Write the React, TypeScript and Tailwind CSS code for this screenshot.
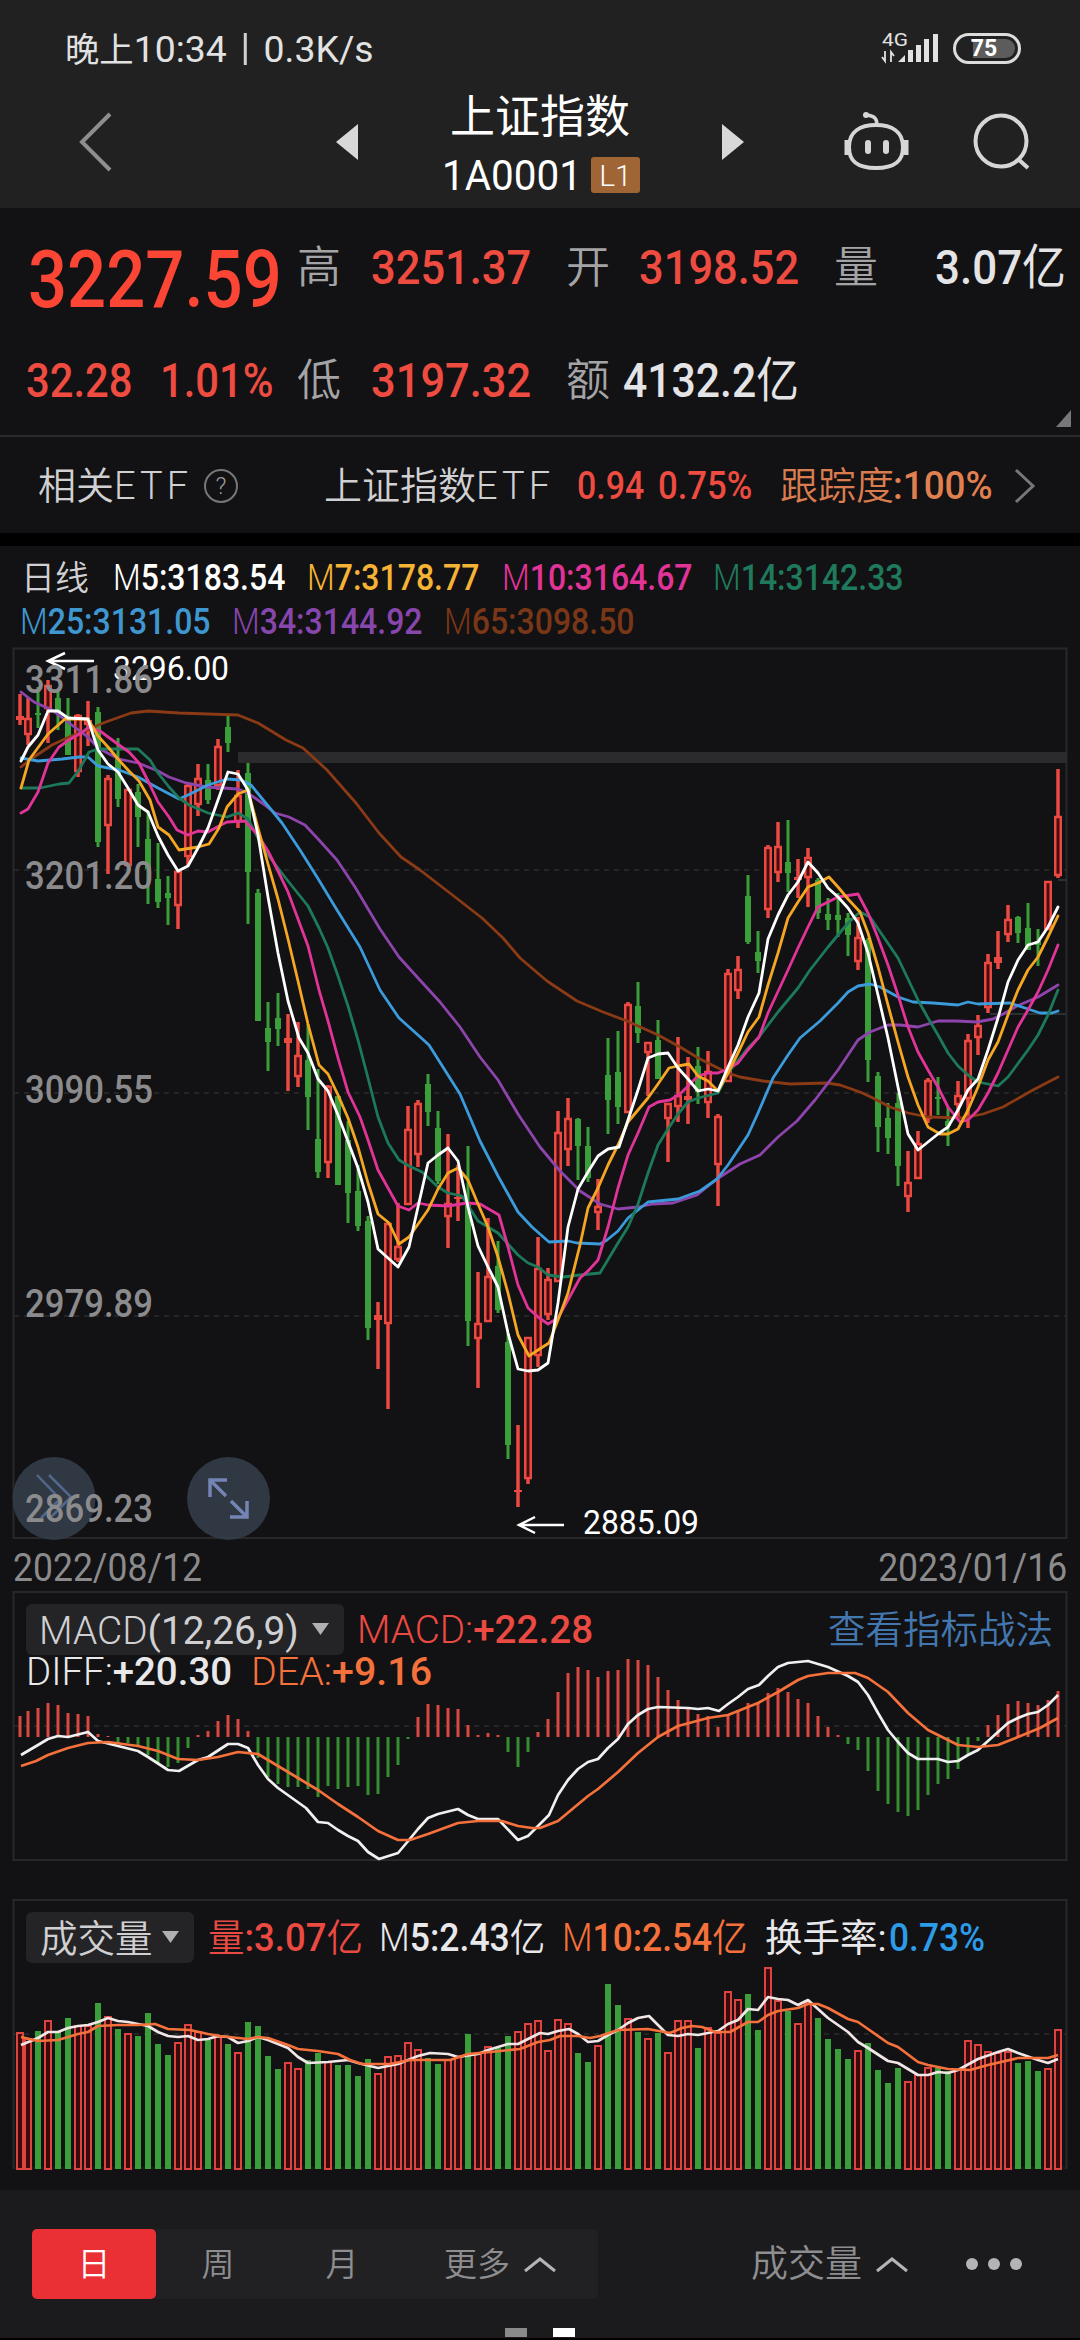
import clsx from 'clsx'

// direction, high, body top, body bottom, low
type Candle = [string, number, number, number, number]

const CANDLES: Candle[] = [
  ['r', 694, 716, 720, 725], ['r', 698, 718, 735, 745], ['g', 687, 713, 715, 728], ['r', 680, 685, 709, 743], ['g', 690, 698, 712, 730],
  ['g', 698, 716, 755, 755], ['r', 714, 715, 772, 777], ['r', 701, 720, 725, 746], ['g', 707, 712, 842, 847], ['r', 775, 778, 826, 874],
  ['g', 738, 758, 799, 807], ['r', 789, 789, 866, 866], ['g', 784, 792, 817, 847], ['g', 811, 839, 869, 904], ['g', 843, 879, 902, 908],
  ['g', 876, 893, 898, 925], ['r', 869, 871, 906, 929], ['r', 783, 785, 857, 865], ['r', 764, 778, 805, 816], ['g', 764, 780, 800, 804],
  ['r', 739, 746, 786, 790], ['g', 715, 727, 743, 752], ['r', 770, 795, 822, 828], ['g', 763, 773, 872, 924], ['g', 889, 893, 1021, 1021],
  ['g', 1002, 1028, 1042, 1071], ['g', 993, 1018, 1029, 1046], ['r', 1014, 1038, 1043, 1091], ['r', 1022, 1055, 1077, 1087], ['g', 1024, 1060, 1097, 1130],
  ['g', 1069, 1139, 1172, 1178], ['r', 1085, 1086, 1163, 1178], ['g', 1096, 1096, 1185, 1185], ['g', 1121, 1140, 1193, 1223], ['g', 1165, 1191, 1226, 1231],
  ['g', 1216, 1221, 1328, 1340], ['r', 1302, 1315, 1320, 1369], ['r', 1222, 1223, 1324, 1409], ['r', 1203, 1246, 1260, 1262], ['r', 1106, 1129, 1205, 1205],
  ['r', 1100, 1103, 1155, 1167], ['g', 1074, 1084, 1112, 1126], ['g', 1111, 1128, 1181, 1184], ['r', 1134, 1203, 1217, 1248], ['r', 1165, 1197, 1199, 1221],
  ['g', 1146, 1205, 1321, 1346], ['r', 1272, 1323, 1339, 1388], ['r', 1218, 1276, 1322, 1322], ['g', 1241, 1266, 1310, 1313], ['g', 1333, 1342, 1445, 1459],
  ['r', 1425, 1490, 1492, 1507], ['r', 1337, 1337, 1479, 1484], ['r', 1237, 1268, 1356, 1367], ['r', 1268, 1279, 1315, 1320], ['r', 1111, 1132, 1282, 1282],
  ['r', 1098, 1118, 1150, 1166], ['g', 1118, 1119, 1146, 1180], ['g', 1127, 1146, 1178, 1182], ['r', 1179, 1206, 1213, 1230], ['g', 1038, 1075, 1100, 1134],
  ['g', 1031, 1072, 1107, 1124], ['r', 1002, 1004, 1113, 1113], ['g', 982, 1006, 1033, 1043], ['r', 1042, 1042, 1053, 1096], ['g', 1020, 1040, 1079, 1079],
  ['r', 1103, 1103, 1119, 1162], ['r', 1037, 1095, 1107, 1122], ['r', 1057, 1096, 1100, 1124], ['g', 1047, 1066, 1092, 1104], ['r', 1051, 1071, 1103, 1118],
  ['r', 1114, 1116, 1165, 1206], ['r', 969, 973, 1082, 1082], ['r', 956, 969, 991, 999], ['g', 875, 896, 942, 944], ['g', 931, 952, 961, 973],
  ['r', 845, 847, 910, 918], ['r', 822, 846, 873, 882], ['g', 820, 862, 873, 892], ['r', 859, 877, 880, 898], ['r', 848, 857, 878, 907],
  ['g', 878, 880, 913, 919], ['g', 898, 914, 920, 930], ['g', 893, 915, 920, 937], ['g', 913, 918, 935, 956], ['r', 917, 937, 962, 970],
  ['g', 938, 940, 1060, 1082], ['g', 1072, 1076, 1127, 1152], ['g', 1103, 1118, 1138, 1154], ['g', 1093, 1103, 1166, 1186], ['r', 1151, 1182, 1197, 1212],
  ['r', 1131, 1143, 1179, 1179], ['r', 1078, 1080, 1119, 1123], ['g', 1077, 1097, 1099, 1115], ['g', 1107, 1121, 1126, 1146], ['r', 1081, 1095, 1105, 1117],
  ['r', 1034, 1040, 1099, 1128], ['r', 1015, 1025, 1038, 1055], ['r', 954, 962, 1008, 1013], ['r', 931, 957, 963, 969], ['r', 905, 919, 935, 942],
  ['g', 916, 917, 933, 943], ['g', 903, 928, 950, 950], ['g', 929, 941, 945, 966], ['r', 881, 881, 930, 930], ['r', 769, 816, 876, 878],
]

const MACD = [
  1716, 1711, 1708, 1703, 1705, 1713, 1714, 1716, 1734, 1736, 1743, 1743, 1746, 1755, 1763, 1767, 1763, 1748, 1735, 1731, 1721, 1715, 1719, 1731,
  1758, 1777, 1784, 1787, 1787, 1789, 1797, 1786, 1789, 1787, 1786, 1795, 1794, 1777, 1765, 1739, 1717, 1704, 1705, 1708, 1709, 1725, 1735, 1733,
  1735, 1752, 1767, 1752, 1732, 1719, 1692, 1673, 1667, 1670, 1677, 1671, 1670, 1659, 1660, 1665, 1677, 1690, 1700, 1707, 1714, 1716, 1727, 1714,
  1710, 1703, 1703, 1693, 1688, 1692, 1699, 1703, 1716, 1727, 1735, 1744, 1750, 1771, 1791, 1804, 1812, 1816, 1810, 1795, 1784, 1779, 1769, 1756,
  1741, 1725, 1715, 1704, 1701, 1703, 1705, 1700, 1691,
]

const VOLUME = [
  2033, 2039, 2031, 2021, 2031, 2018, 2026, 2026, 2003, 2017, 2029, 2034, 2036, 2013, 2044, 2055, 2043, 2025, 2032, 2040, 2037, 2044, 2053, 2022,
  2026, 2056, 2069, 2063, 2069, 2060, 2053, 2062, 2065, 2065, 2076, 2059, 2074, 2057, 2056, 2043, 2050, 2058, 2064, 2060, 2057, 2034, 2054, 2047,
  2048, 2036, 2032, 2024, 2021, 2051, 2020, 2024, 2053, 2062, 2046, 1984, 2005, 2019, 2032, 2039, 2033, 2053, 2021, 2021, 2048, 2028, 2033, 1992,
  2000, 1994, 2030, 1968, 2001, 2011, 2024, 2003, 2018, 2039, 2049, 2059, 2051, 2043, 2070, 2083, 2068, 2082, 2075, 2068, 2068, 2071, 2070, 2041,
  2045, 2052, 2053, 2052, 2063, 2061, 2071, 2069, 2030,
]

const MA_LINES = [
  {
    color: '#8a3a15',
    points: '21,767 34,757 52,745 69,737 90,729 103,723 131,713 148,711 179,713 238,715 258,723 286,740 303,748 327,770 356,803 379,833 401,857 420,870 455,897 482,918 503,938 520,958 547,981 577,1001 603,1012 627,1021 658,1035 680,1047 700,1059 728,1073 740,1077 763,1081 790,1084 827,1083 840,1085 860,1092 873,1098 890,1107 908,1113 928,1117 963,1118 983,1114 1003,1107 1033,1090 1058,1077',
  },
  {
    color: '#8e44ad',
    points: '21,692 34,702 52,710 69,723 88,737 98,748 119,759 138,763 158,771 169,777 186,783 207,787 238,789 248,793 262,803 275,813 289,817 305,825 319,840 337,860 355,887 380,929 399,957 418,978 440,1002 460,1027 480,1057 498,1080 518,1114 540,1147 560,1171 580,1191 600,1204 618,1209 638,1207 653,1204 673,1203 697,1195 717,1179 740,1164 760,1155 778,1137 797,1121 815,1100 838,1070 858,1040 870,1032 888,1025 900,1025 918,1027 938,1021 957,1021 977,1022 993,1019 1005,1013 1017,1006 1038,997 1058,985',
  },
  {
    color: '#3b9bdb',
    points: '21,758 38,761 62,759 79,757 88,757 98,766 119,770 138,777 158,788 179,799 188,795 208,785 227,779 241,780 251,785 269,807 282,823 300,850 317,877 337,910 360,947 380,990 399,1018 418,1035 429,1045 460,1094 480,1141 498,1176 518,1212 532,1227 549,1242 568,1241 577,1243 600,1244 607,1240 618,1231 628,1218 648,1202 678,1199 700,1191 717,1179 728,1165 748,1135 758,1113 773,1078 788,1055 800,1038 820,1021 838,1003 848,992 858,986 870,984 880,987 898,997 913,1002 933,1003 958,1005 968,1002 978,1004 1010,1003 1028,1009 1040,1013 1052,1013 1058,1011',
  },
  {
    color: '#1c7a5a',
    points: '21,788 40,788 59,784 69,783 79,770 89,752 98,749 138,749 150,760 158,773 169,787 179,798 189,805 208,813 227,817 238,813 248,819 258,838 268,855 288,881 308,906 319,928 328,948 338,976 348,1006 358,1040 368,1078 378,1117 388,1143 399,1160 409,1166 422,1172 438,1187 448,1193 462,1196 478,1221 498,1233 518,1255 528,1263 538,1267 548,1275 563,1277 580,1275 600,1273 618,1243 628,1227 638,1204 648,1173 658,1145 668,1129 678,1114 688,1102 698,1098 718,1093 728,1073 748,1048 759,1037 778,1012 798,988 810,970 828,947 848,923 860,912 870,917 898,958 918,1000 928,1018 938,1035 948,1053 958,1066 968,1075 978,1082 998,1086 1008,1077 1028,1050 1038,1035 1048,1015 1058,990',
  },
  {
    color: '#e23498',
    points: '21,813 28,809 38,792 48,763 59,747 69,740 81,733 89,727 100,731 119,745 129,752 139,763 150,785 158,802 169,817 177,830 188,835 198,831 208,832 219,826 227,822 245,821 258,835 268,851 278,871 288,892 298,919 308,946 319,990 328,1021 338,1058 348,1092 360,1117 368,1140 378,1170 388,1188 398,1206 409,1210 418,1203 428,1205 448,1206 467,1203 480,1204 499,1215 508,1247 518,1285 528,1308 538,1317 548,1324 558,1318 568,1300 580,1278 588,1271 598,1260 608,1227 618,1188 628,1155 638,1133 649,1107 658,1102 670,1100 680,1094 698,1076 708,1073 718,1073 728,1069 738,1063 748,1050 759,1037 768,1013 788,970 798,948 808,927 818,907 828,902 838,897 858,894 868,913 878,938 888,965 898,995 908,1027 918,1052 928,1070 938,1087 948,1107 960,1122 968,1120 978,1110 988,1093 998,1073 1008,1050 1018,1027 1028,1010 1038,992 1048,970 1058,945',
  },
  {
    color: '#f5a623',
    points: '21,788 29,760 48,734 65,719 88,719 98,736 108,747 118,759 128,770 139,781 150,800 158,827 169,835 179,850 198,847 209,844 219,828 227,807 238,794 248,790 258,828 268,864 278,899 288,939 298,981 308,1024 319,1065 328,1074 338,1095 348,1118 358,1147 368,1183 378,1214 389,1223 399,1244 409,1237 428,1210 438,1189 448,1173 458,1168 468,1180 478,1204 488,1227 498,1257 508,1293 518,1335 529,1356 538,1350 549,1343 558,1320 568,1293 580,1245 588,1208 598,1188 608,1165 618,1145 628,1122 638,1110 648,1098 658,1084 669,1068 678,1066 689,1064 698,1076 708,1081 718,1091 728,1073 738,1053 748,1032 759,1017 768,985 778,953 788,918 798,902 808,887 818,883 829,877 838,887 848,899 860,912 868,933 878,967 888,1005 898,1042 908,1077 918,1105 928,1127 940,1134 948,1134 958,1129 968,1110 978,1087 988,1060 998,1042 1008,1015 1018,990 1028,970 1038,957 1048,937 1058,916',
  },
  {
    color: '#ffffff',
    points: '21,761 28,747 38,735 48,711 58,711 68,718 88,719 98,750 108,764 118,772 128,788 138,805 148,812 158,836 168,855 178,871 188,866 198,848 208,828 218,800 228,772 238,774 248,790 258,835 268,897 278,953 288,1001 299,1038 308,1053 318,1079 328,1091 338,1115 358,1168 368,1202 378,1249 388,1258 398,1267 409,1247 418,1207 428,1163 438,1155 448,1148 458,1161 468,1207 478,1246 488,1267 498,1287 508,1333 518,1369 528,1371 538,1370 548,1363 558,1303 568,1227 578,1189 588,1172 598,1156 608,1149 619,1147 628,1120 638,1090 648,1058 658,1054 668,1053 678,1068 688,1079 698,1091 708,1089 718,1091 728,1067 738,1045 748,1017 759,993 768,939 778,915 788,895 798,882 808,862 818,873 828,888 838,897 848,908 858,923 868,953 878,995 888,1038 898,1087 908,1134 918,1150 928,1142 938,1134 948,1127 958,1110 968,1090 978,1079 988,1050 998,1018 1008,982 1018,960 1028,945 1038,942 1048,927 1058,907',
  },
]

const DIFF =
  '21,1755 38,1745 48,1739 58,1736 68,1737 88,1732 98,1741 118,1746 138,1751 148,1757 168,1770 179,1771 198,1760 208,1757 228,1744 238,1744 248,1748 258,1765 268,1779 278,1788 306,1808 318,1822 328,1823 338,1830 348,1836 358,1841 368,1852 379,1859 398,1853 409,1840 418,1829 428,1818 438,1814 458,1809 468,1815 478,1819 498,1819 518,1840 528,1836 540,1824 549,1815 558,1795 568,1780 578,1769 588,1762 598,1759 608,1748 618,1739 628,1724 638,1715 648,1709 658,1707 688,1708 698,1709 708,1708 719,1711 728,1704 738,1697 748,1689 759,1685 768,1676 778,1667 788,1663 808,1661 828,1667 848,1676 858,1682 868,1695 878,1713 888,1730 898,1742 908,1753 918,1759 938,1759 948,1762 958,1761 968,1755 978,1750 988,1741 998,1732 1008,1723 1018,1718 1028,1714 1038,1712 1048,1705 1058,1695'
const DEA =
  '21,1766 36,1761 48,1755 68,1748 88,1743 108,1742 138,1746 158,1751 178,1759 198,1760 218,1757 238,1752 258,1754 278,1766 298,1778 318,1790 338,1804 358,1817 378,1831 398,1840 410,1840 428,1834 458,1823 478,1821 502,1821 518,1826 532,1828 540,1828 558,1821 588,1796 598,1789 618,1772 638,1753 658,1737 678,1726 708,1718 728,1715 758,1703 778,1692 798,1680 808,1676 828,1673 855,1673 868,1678 888,1692 908,1713 928,1730 948,1740 958,1745 978,1747 998,1745 1018,1737 1040,1728 1058,1718'
const VOL_M5 =
  '21,2045 38,2038 48,2032 58,2032 68,2028 78,2026 88,2025 98,2022 108,2018 118,2021 128,2022 148,2026 158,2032 168,2036 178,2037 188,2036 198,2040 208,2039 218,2036 228,2037 238,2043 248,2041 258,2037 268,2040 278,2044 288,2048 298,2057 308,2063 328,2062 348,2060 358,2063 378,2068 398,2064 418,2056 430,2053 448,2054 458,2057 478,2054 488,2050 508,2044 518,2044 530,2038 540,2033 548,2034 558,2031 569,2029 578,2034 588,2042 598,2041 608,2035 618,2030 628,2023 638,2018 649,2016 658,2025 668,2035 678,2036 688,2034 698,2035 718,2031 728,2024 738,2020 748,2009 758,2010 768,1997 778,1999 788,2000 798,2005 808,2000 818,2009 828,2018 848,2032 858,2042 868,2048 888,2061 898,2063 908,2069 918,2075 928,2075 938,2072 948,2073 958,2070 978,2059 998,2052 1008,2049 1018,2053 1038,2060 1048,2063 1058,2059'
const VOL_M10 =
  '21,2037 38,2041 58,2040 78,2034 88,2032 98,2026 118,2025 138,2025 155,2024 168,2029 190,2030 208,2034 220,2036 248,2039 258,2037 268,2038 288,2045 298,2049 318,2051 338,2054 350,2060 362,2064 390,2064 410,2060 450,2060 468,2054 490,2052 520,2049 538,2042 550,2040 560,2036 578,2036 590,2038 600,2036 618,2030 648,2029 670,2033 682,2028 692,2026 702,2027 715,2032 730,2032 748,2022 758,2022 768,2015 778,2011 798,2008 808,2004 818,2004 828,2008 848,2019 858,2022 868,2029 888,2043 898,2047 918,2062 928,2065 948,2069 970,2070 988,2065 1018,2058 1048,2058 1058,2055'

const PRICE_LABELS = [
  { text: '3311.86', y: 693 },
  { text: '3201.20', y: 889 },
  { text: '3090.55', y: 1103 },
  { text: '2979.89', y: 1317 },
  { text: '2869.23', y: 1522 },
]

const RED = '#ea4a42'
const GREEN = '#3a9f3a'

const candleX = (i: number) => (i === 0 ? 20 : 18 + i * 10)

function Gridline({ y }: { y: number }) {
  return <path d={`M14 ${y}H1066`} stroke="#2c2c2e" strokeWidth="1.5" strokeDasharray="5 5" />
}

function PriceChart() {
  return (
    <svg className="block overflow-visible" width="1080" height="892" viewBox="0 648 1080 892" fill="none">
      <rect x="13.5" y="648.5" width="1053" height="889.5" stroke="#28282a" strokeWidth="2" />
      <Gridline y={870} />
      <Gridline y={1093} />
      <Gridline y={1316} />
      <path d="M1058 880H1067M990 1014H1066" stroke="#2b3033" strokeWidth="2" />
      <rect x="238" y="752" width="829" height="11" fill="#2b2a2c" />

      {CANDLES.map(([dir, high, top, bottom, low], i) => {
        const x = candleX(i)
        const h = bottom - top
        if (dir === 'g') {
          return (
            <g key={i} fill={GREEN}>
              <rect x={x - 1.5} y={high} width="3" height={low - high} />
              <rect x={x - 3} y={top} width="6" height={h} />
            </g>
          )
        }
        return (
          <g key={i} fill={RED}>
            <rect x={x - 1.75} y={high} width="3.5" height={low - high} />
            {h > 6 ? (
              <rect x={x - 2.75} y={top + 1} width="5.5" height={h - 2} fill="#4a0d0e" stroke={RED} strokeWidth="2.5" />
            ) : (
              <rect x={x - 4} y={top} width="8" height={h} />
            )}
          </g>
        )
      })}

      {MA_LINES.map((line) => (
        <polyline key={line.color} points={line.points} stroke={line.color} strokeWidth="2.8" strokeLinejoin="round" strokeLinecap="round" />
      ))}

      {/* 最高 / 最低 */}
      <g stroke="#fff" strokeWidth="2.5">
        <path d="M94 661H48M65 653L48 661L65 669" />
        <path d="M564 1525H519M535 1517L519 1525L535 1533" />
      </g>
      <g className="fill-white font-['Roboto',sans-serif] text-[33px]">
        <text x="113" y="680" textLength="116" lengthAdjust="spacingAndGlyphs">3296.00</text>
        <text x="583" y="1534" textLength="116" lengthAdjust="spacingAndGlyphs">2885.09</text>
      </g>

      <g fill="#323c48" fillOpacity="0.92">
        <circle cx="54" cy="1498.500" r="41.5" />
        <circle cx="228.500" cy="1498.500" r="41.5" />
      </g>
      <path d="M37 1475L60 1499L41 1518M49 1475L71 1497L50 1518" stroke="#52678c" strokeWidth="2.5" />
      <g stroke="#7484b4" strokeWidth="3.5">
        <path d="M210 1497V1480H227M211 1481L226 1496" />
        <path d="M247 1501V1517H230M246 1516L231 1501" />
      </g>

      <g className="fill-[#8b8b8d] font-['Roboto',sans-serif] text-[38px] font-medium">
        {PRICE_LABELS.map((label) => (
          <text key={label.text} x="25" y={label.y} textLength="128" lengthAdjust="spacingAndGlyphs">
            {label.text}
          </text>
        ))}
      </g>
    </svg>
  )
}

function MacdChart() {
  return (
    <svg className="col-start-1 row-start-1" width="1080" height="271" viewBox="0 1591 1080 271" fill="none">
      <rect x="13.5" y="1592" width="1053" height="268" stroke="#28282a" strokeWidth="2" />
      <Gridline y={1726} />
      {MACD.map((end, i) => (
        <rect
          key={i}
          x={candleX(i) - 1.5}
          y={Math.min(end, 1737)}
          width="3"
          height={Math.abs(end - 1737)}
          fill={end < 1737 ? '#d94841' : '#358f30'}
        />
      ))}
      <polyline points={DIFF} stroke="#f0f0f0" strokeWidth="2.7" strokeLinejoin="round" />
      <polyline points={DEA} stroke="#f5713c" strokeWidth="2.7" strokeLinejoin="round" />
    </svg>
  )
}

function VolumeChart() {
  return (
    <svg className="col-start-1 row-start-1" width="1080" height="272" viewBox="0 1899 1080 272" fill="none">
      <path d="M13.5 2169V1900H1066.5V2169" stroke="#28282a" strokeWidth="2" />
      <path d="M13 2168H1066" stroke="#28282a" />
      <Gridline y={2034} />
      {VOLUME.map((top, i) =>
        CANDLES[i][0] === 'g' ? (
          <rect key={i} x={candleX(i) - 3} y={top} width="6" height={2169 - top} fill={GREEN} />
        ) : (
          <rect key={i} x={candleX(i) - 3} y={top} width="6" height={2169 - top} fill="#3a0b0c" stroke="#dd4440" strokeWidth="2" />
        )
      )}
      <polyline points={VOL_M5} stroke="#f0e6e6" strokeWidth="2.7" strokeLinejoin="round" />
      <polyline points={VOL_M10} stroke="#f5713c" strokeWidth="2.7" strokeLinejoin="round" />
    </svg>
  )
}

// text narrowed horizontally, the width class sets the room it takes in its row
function Narrow({ className, children }: { className: string; children: React.ReactNode }) {
  return <span className={clsx('block shrink-0 origin-left whitespace-nowrap', className)}>{children}</span>
}

function StatusBar() {
  return (
    <div className="flex h-24 items-center pl-[65px] text-[37px] text-[#e2e2e2]">
      <Narrow className="mt-[3px] w-[815px] scale-x-[1.01]">
        <span className="text-[34px]">晚上</span>10:34
        <span className="mx-[17px] inline-block h-[32px] w-[2.5px] translate-y-[3px] bg-[#d0d0d0]" />
        0.3K/s
      </Narrow>
      <svg className="overflow-visible" width="60" height="36" viewBox="878 30 60 36" fill="#e2e2e2">
        <text x="880" y="46" className="font-['Roboto',sans-serif] text-[19px]" textLength="26" lengthAdjust="spacingAndGlyphs">4G</text>
        <path d="M883 51V61L880 57M889 62V52L892 56" fill="none" stroke="#e2e2e2" strokeWidth="1.8" />
        <path d="M896 62L903 55V62ZM906 50H911V62H906ZM914 45H919V62H914ZM922 39H927V62H922ZM931 34H936V62H931Z" />
      </svg>
      <div className="ml-[13px] flex h-[31px] w-[68px] items-center rounded-full border-[3px] border-[#dcdcdc] p-[3px]">
        <div className="flex h-[19px] w-[56px] items-center justify-center rounded-r-full bg-linear-to-r from-transparent from-25% to-[#5c5c5c] to-25% text-[23px] font-bold leading-none text-white">
          <span className="-translate-x-[3px]">75</span>
        </div>
      </div>
    </div>
  )
}

function TitleBar() {
  return (
    <div className="flex h-28 items-start">
      <svg className="mt-[14px] ml-[76px]" width="40" height="64" viewBox="0 0 40 64" fill="none">
        <path d="M34 4L6 32L34 60" stroke="#8e8e8e" strokeWidth="4" />
      </svg>
      <svg className="mt-[28px] ml-[219px]" width="24" height="36" viewBox="0 0 24 36">
        <path d="M23 0V36L1 18Z" fill="#d8d8d8" />
      </svg>
      <div className="ml-[64px] flex w-[240px] flex-col items-center text-white">
        <div className="-mt-[2px] mr-[6px] text-[45px] leading-[48px]">上证指数</div>
        <div className="mt-[11px] ml-[-4px] flex items-center gap-[12px]">
          <Narrow className="w-[137px] scale-x-[0.94] text-[43px] leading-[44px]">1A0001</Narrow>
          <span className="flex h-[36px] w-[49px] items-center justify-center rounded-[3px] bg-[#a06535] text-[30px] font-light">L1</span>
        </div>
      </div>
      <svg className="mt-[28px] ml-[58px]" width="24" height="36" viewBox="0 0 24 36">
        <path d="M1 0V36L23 18Z" fill="#d8d8d8" />
      </svg>
      <svg className="mt-[12px] ml-[97px]" width="68" height="66" viewBox="841 108 68 66" fill="none" stroke="#d6d6d6" strokeWidth="4">
        <path d="M875 125C860 125 848 131 848 147C848 162 857 168 875 168C893 168 902 162 902 147C902 131 890 125 875 125Z" />
        <path d="M846 140V155M905 140V155" strokeWidth="5" />
        <path d="M876 125C876 118 873 116 866 115" strokeWidth="3.500" />
        <circle cx="865" cy="115" r="3" fill="#d6d6d6" stroke="none" />
        <path d="M867 143V151M885 143V151" strokeWidth="6" strokeLinecap="round" />
      </svg>
      <svg className="mt-[14px] ml-[61px]" width="62" height="64" viewBox="970 110 62 64" fill="none" stroke="#d6d6d6" strokeWidth="4">
        <circle cx="1000" cy="141" r="25.500" />
        <path d="M1017 159L1027 168" />
      </svg>
    </div>
  )
}

function Quote() {
  return (
    <div className="h-[229px] border-b-2 border-[#29292b] pt-[31px] text-[48px] font-medium text-[#ee4b41]">
      <div className="flex h-[58px] items-center pl-[28px]">
        <Narrow className="mt-[24px] w-[269px] scale-x-[0.86] text-[80px] leading-none text-[#fb4535]">3227.59</Narrow>
        <Narrow className="w-[74px] text-[44px] font-[350] text-[#a4a4a6]">高</Narrow>
        <Narrow className="w-[195px] scale-x-[0.905]">3251.37</Narrow>
        <Narrow className="w-[73px] text-[44px] font-[350] text-[#a4a4a6]">开</Narrow>
        <Narrow className="w-[195px] scale-x-[0.905]">3198.52</Narrow>
        <Narrow className="w-[101px] text-[44px] font-[350] text-[#a4a4a6]">量</Narrow>
        <Narrow className="scale-x-[0.915] text-[#e4e4e6]">
          3.07<span className="font-normal">亿</span>
        </Narrow>
      </div>
      <div className="mt-[55px] flex h-[58px] items-center pl-[26px]">
        <Narrow className="w-[134px] scale-x-[0.87]">32.28</Narrow>
        <Narrow className="w-[137px] scale-x-[0.87]">1.01%</Narrow>
        <Narrow className="w-[74px] text-[44px] font-[350] text-[#a4a4a6]">低</Narrow>
        <Narrow className="w-[195px] scale-x-[0.905]">3197.32</Narrow>
        <Narrow className="w-[57px] text-[44px] font-[350] text-[#a4a4a6]">额</Narrow>
        <Narrow className="w-[433px] scale-x-[0.89] text-[#e4e4e6]">
          4132.2<span className="font-normal">亿</span>
        </Narrow>
        <svg className="mt-[76px]" width="16" height="18" viewBox="0 0 16 18">
          <path d="M15 0V17H0Z" fill="#77777a" />
        </svg>
      </div>
    </div>
  )
}

function EtfRow() {
  return (
    <div className="flex h-[96px] items-center pt-[2px] pl-[38px] text-[38px] text-[#d0d0d2]">
      <Narrow className="w-[166px] font-[350]">
        相关<span className="tracking-[4px]">ETF</span>
      </Narrow>
      <span className="flex h-[34px] w-[34px] shrink-0 items-center justify-center rounded-full border-2 border-[#77777a] text-[24px] font-light text-[#9a9a9c]">?</span>
      <Narrow className="ml-[86px] w-[253px] font-[350]">
        上证指数<span className="tracking-[4px]">ETF</span>
      </Narrow>
      <Narrow className="w-[81px] scale-x-[0.87] text-[39px] font-medium text-[#ee4b41]">0.94</Narrow>
      <Narrow className="w-[122px] scale-x-[0.89] text-[39px] font-medium text-[#ee4b41]">0.75%</Narrow>
      <Narrow className="w-[113px] text-[38px] font-[350] text-[#d97c50]">跟踪度</Narrow>
      <Narrow className="w-[121px] scale-x-[0.945] text-[39px] font-medium text-[#e08050]">:100%</Narrow>
      <svg width="24" height="36" viewBox="0 0 24 36" fill="none">
        <path d="M2 2L19 18L2 34" stroke="#77777a" strokeWidth="3" />
      </svg>
    </div>
  )
}

function Ma({ name, value, className }: { name: string; value: string; className: string }) {
  return (
    <Narrow className={clsx('scale-x-[0.865] font-medium', className)}>
      <span className="font-light">M</span>
      {name}:{value}
    </Narrow>
  )
}

function MaLegend() {
  return (
    <div className="h-[102px] pt-[10px] text-[37px] leading-[44px]">
      <div className="flex pl-[21px]">
        <Narrow className="w-[92px] text-[34px] font-[350] text-[#d0d0d2]">日线</Narrow>
        <Ma name="5" value="3183.54" className="w-[194px] text-white" />
        <Ma name="7" value="3178.77" className="w-[195px] text-[#f5b335]" />
        <Ma name="10" value="3164.67" className="w-[211px] text-[#e23498]" />
        <Ma name="14" value="3142.33" className="text-[#1f7a5c]" />
      </div>
      <div className="flex pl-[20px]">
        <Ma name="25" value="3131.05" className="w-[212px] text-[#3f97d0]" />
        <Ma name="34" value="3144.92" className="w-[212px] text-[#8646ac]" />
        <Ma name="65" value="3098.50" className="text-[#7a3717]" />
      </div>
    </div>
  )
}

function DownTriangle() {
  return (
    <svg className="-mt-[2px]" width="17" height="12" viewBox="0 0 17 12">
      <path d="M0 0H17L8.500 12Z" fill="#b0b0b2" />
    </svg>
  )
}

function MacdPanel() {
  return (
    <div className="grid">
      <MacdChart />
      <div className="col-start-1 row-start-1 pt-[13px] pl-[26px] text-[39px]">
        <div className="flex h-[51px] items-center">
          <div className="flex h-[51px] w-[318px] items-center rounded-[6px] bg-[#242426] pl-[13px] text-[#d0d0d2]">
            <Narrow className="mt-[3px] w-[273px] scale-x-[0.995]">
              <span className="font-light">MACD</span>(12,26,9)
            </Narrow>
            <DownTriangle />
          </div>
          <Narrow className="mt-[1px] ml-[13px] w-[471px] scale-x-[0.99] font-medium text-[#ea4a42]">
            <span className="font-light">MACD:</span>+22.28
          </Narrow>
          <Narrow className="mt-[2px] text-[37.5px] font-[350] text-[#4377b0]">查看指标战法</Narrow>
        </div>
        <div className="mt-[1px] flex h-[32px] items-center">
          <Narrow className="w-[225px] scale-x-[0.985] font-medium text-[#e8e8ea]">
            <span className="font-light">DIFF:</span>+20.30
          </Narrow>
          <Narrow className="scale-x-[1.01] font-medium text-[#f5713c]">
            <span className="font-light">DEA:</span>+9.16
          </Narrow>
        </div>
      </div>
    </div>
  )
}

function VolumePanel() {
  return (
    <div className="mt-[37px] grid">
      <VolumeChart />
      <div className="col-start-1 row-start-1 flex h-[64px] items-center pt-[13px] pl-[26px] text-[38px] font-medium">
        <div className="flex h-[51px] w-[168px] items-center rounded-[6px] bg-[#242426] pl-[14px] text-[37.5px] font-[350] text-[#d0d0d2]">
          <Narrow className="mt-[3px] w-[122px]">成交量</Narrow>
          <DownTriangle />
        </div>
        <Narrow className="mt-[2px] ml-[14px] w-[171px] scale-x-[0.96] text-[#ea4a42]">
          <span className="font-[350]">量</span>:3.07<span className="font-[350]">亿</span>
        </Narrow>
        <Narrow className="mt-[2px] w-[183px] scale-x-[0.935] text-[#e8e8ea]">
          <span className="font-light">M</span>5:2.43<span className="font-[350]">亿</span>
        </Narrow>
        <Narrow className="mt-[2px] w-[203px] scale-x-[0.93] text-[#f5713c]">
          <span className="font-light">M</span>10:2.54<span className="font-[350]">亿</span>
        </Narrow>
        <Narrow className="mt-[2px] w-[124px] text-[37.5px] font-normal text-[#e8e8ea]">换手率:</Narrow>
        <Narrow className="mt-[2px] scale-x-[0.93] text-[#2c9be8]">0.73%</Narrow>
      </div>
    </div>
  )
}

function CaretUp() {
  return (
    <svg width="32" height="16" viewBox="0 0 32 16" fill="none">
      <path d="M1 14L16 2L31 14" stroke="#b4b4b6" strokeWidth="3" />
    </svg>
  )
}

function BottomBar() {
  return (
    <div className="mt-[19px] h-[148px] bg-[#1b1b1d] pt-[39px] text-[33px] font-[350] text-[#8e8e90]">
      <div className="flex h-[70px] items-center pl-[32px]">
        <div className="flex h-[70px] w-[566px] items-center rounded-[5px] bg-[#212123]">
          <div className="flex h-full w-[124px] items-center justify-center rounded-[5px] bg-[#ea3034] pt-[2px] text-white">日</div>
          <div className="w-[124px] pt-[2px] text-center">周</div>
          <div className="w-[124px] pt-[2px] text-center">月</div>
          <div className="ml-[40px] flex items-center gap-[14px] pt-[2px]">
            更多
            <CaretUp />
          </div>
        </div>
        <div className="ml-[153px] flex items-center gap-[14px] pt-[2px] text-[37px]">
          成交量
          <CaretUp />
        </div>
        <div className="ml-[58px] flex gap-[10px]">
          <div className="h-3 w-3 rounded-full bg-[#b4b4b6]" />
          <div className="h-3 w-3 rounded-full bg-[#b4b4b6]" />
          <div className="h-3 w-3 rounded-full bg-[#b4b4b6]" />
        </div>
      </div>
      <div className="mt-[29px] flex gap-[26px] pl-[505px]">
        <div className="h-[9px] w-[22px] bg-[#8a8a8a]" />
        <div className="h-[9px] w-[22px] bg-white" />
      </div>
    </div>
  )
}

export default function App() {
  return (
    <div className="h-[2340px] w-[1080px] overflow-hidden bg-black font-['Roboto','Noto_Sans_CJK_SC',sans-serif]">
      <header className="h-[208px] bg-[#212121]">
        <StatusBar />
        <TitleBar />
      </header>
      <section className="bg-[#121113]">
        <Quote />
        <EtfRow />
      </section>
      <section className="mt-[13px] bg-[#121113]">
        <MaLegend />
        <PriceChart />
        <div className="flex h-[51px] items-center justify-between pt-[5px] pr-[13px] pl-[13px] text-[38px] text-[#8b8b8d]">
          <Narrow className="scale-x-[0.935]">2022/08/12</Narrow>
          <Narrow className="origin-right scale-x-[0.935]">2023/01/16</Narrow>
        </div>
        <MacdPanel />
        <VolumePanel />
        <BottomBar />
      </section>
    </div>
  )
}
